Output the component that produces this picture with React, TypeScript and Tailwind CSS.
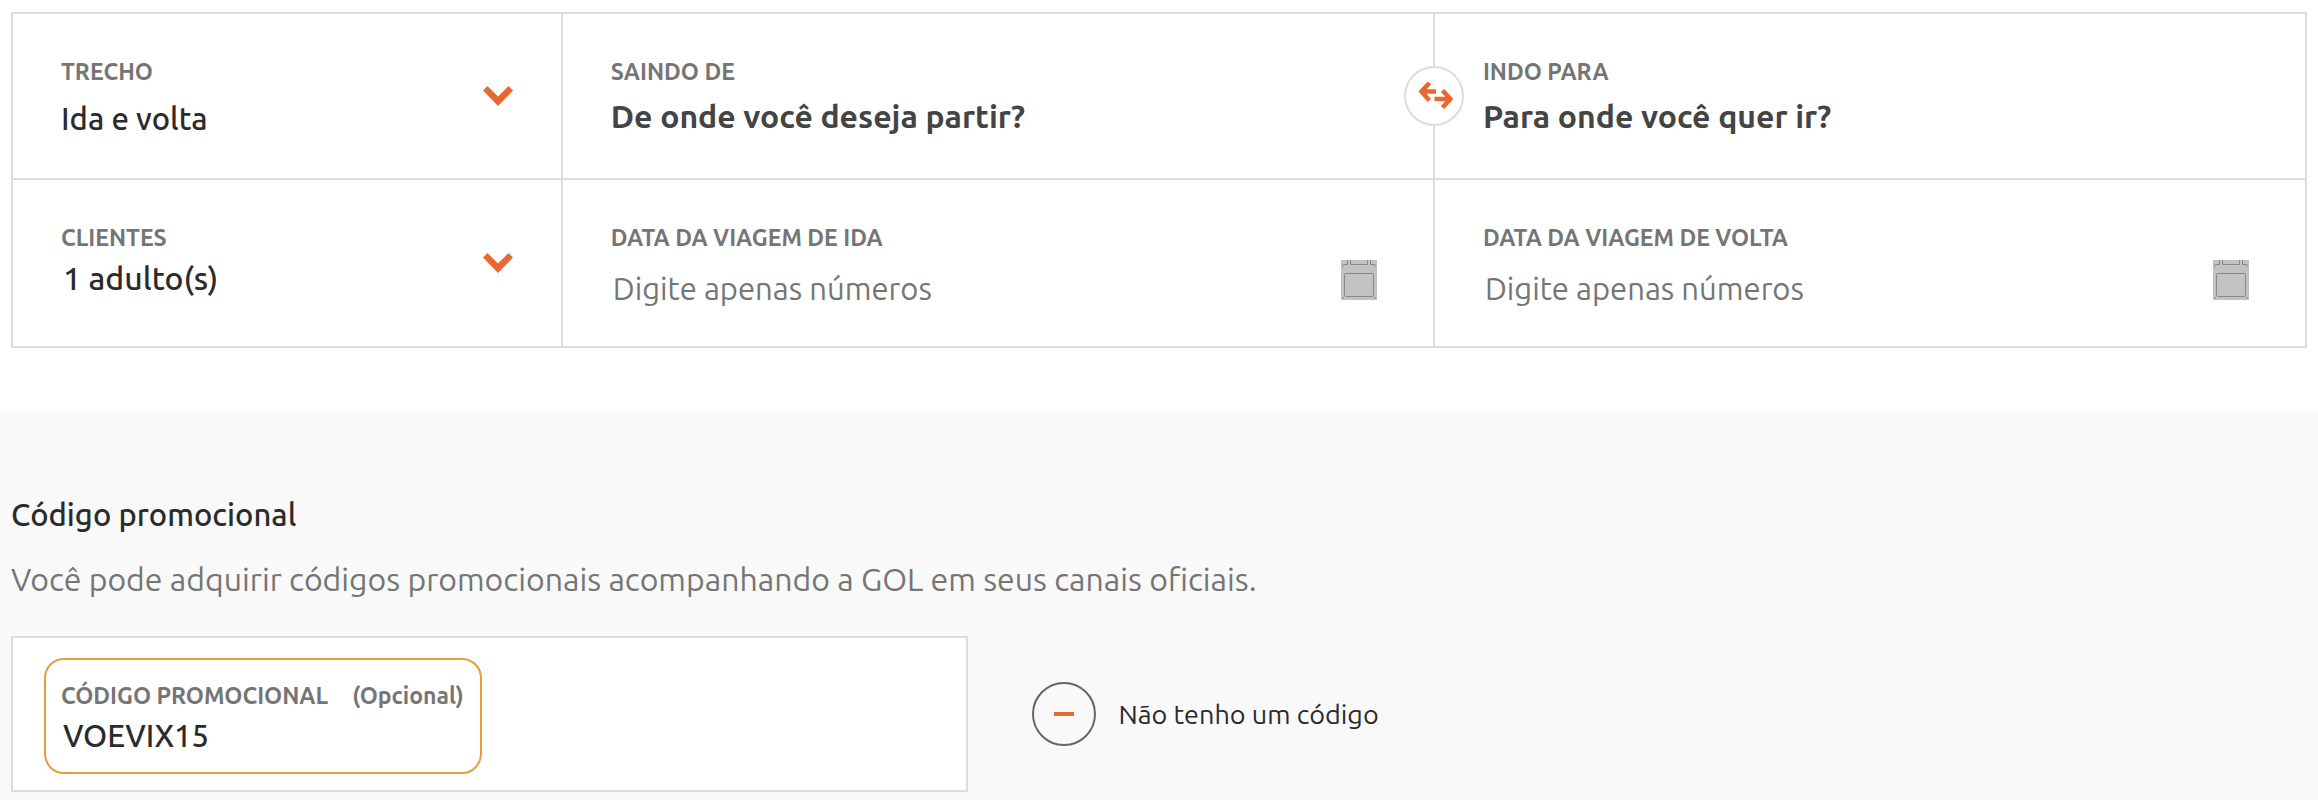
import React from "react";

const labelClass = "block text-[23px] leading-6 font-bold text-[#757575]";
const valueClass =
  "block w-full appearance-none bg-transparent leading-10 font-medium text-[#2b2b2b] outline-none";

const ChevronIcon = () => (
  <svg className="h-5 w-[30px] shrink-0 self-center" viewBox="0 0 30 20" aria-hidden="true">
    <path d="M4.5 0 15 10.6 25.5 0 30 4.6 15 20 0 4.6Z" fill="#e9682f" />
  </svg>
);

const SwapIcon = () => (
  <svg className="size-14" viewBox="0 0 56 56" fill="none" stroke="#e9682f" strokeWidth="4.6" aria-hidden="true">
    <path d="M23.5 15 15.3 23.5 23.5 32.5M16 23.5H30" strokeLinejoin="round" />
    <path d="M36.500 22.5 44.5 31 36.500 39.5M28.5 31H44.5" strokeLinejoin="round" />
  </svg>
);

const CalendarIcon = () => (
  <svg className="h-10 w-9" viewBox="0 0 36 40" fill="none" stroke="#878787" aria-hidden="true">
    <path d="M0 0H36V40H0Z" fill="#c2c2c2" stroke="none" />
    <path d="M1 7 2.5 4.5H6.5V0M9.5 0V4.5H26.5V0M29.5 0V4.5H33.5L35 7M1 37 3 39M35 37 33 39" />
    <rect x="3.5" y="13.5" width="29" height="23" rx="1" />
  </svg>
);

type SelectCellProps = {
  id: string;
  label: string;
  value: string;
  cellClass?: string;
  selectClass: string;
};

const SelectCell: React.FC<SelectCellProps> = ({ id, label, value, cellClass = "", selectClass }) => (
  <div className={`flex border-[#dcdcdc] px-12 ${cellClass}`}>
    <div className="min-w-0 flex-1 pt-[46px]">
      <label htmlFor={id} className={labelClass}>
        {label}
      </label>
      <select id={id} className={`${valueClass} ${selectClass}`}>
        <option>{value}</option>
      </select>
    </div>
    <ChevronIcon />
  </div>
);

type PlaceCellProps = {
  id: string;
  label: string;
  placeholder: string;
  children?: React.ReactNode;
};

const PlaceCell: React.FC<PlaceCellProps> = ({ id, label, placeholder, children }) => (
  <div className="relative border-l-2 border-[#dcdcdc] px-12 pt-[46px] pb-[42px]">
    {children}
    <label htmlFor={id} className={labelClass}>
      {label}
    </label>
    <input
      id={id}
      type="text"
      placeholder={placeholder}
      className="mt-3 block w-full bg-transparent text-[32px] leading-10 font-bold text-[#444444] outline-none placeholder:text-[#444444]"
    />
  </div>
);

const DateCell: React.FC<{ id: string; label: string }> = ({ id, label }) => (
  <div className="flex border-t-2 border-l-2 border-[#dcdcdc] pr-14 pl-12">
    <div className="min-w-0 flex-1 pt-[46px] pb-[37px]">
      <label htmlFor={id} className={labelClass}>
        {label}
      </label>
      <input
        id={id}
        type="text"
        inputMode="numeric"
        placeholder="Digite apenas números"
        className="mt-[19px] block w-full bg-transparent pl-0.5 text-[31px] leading-10 text-[#757575] outline-none placeholder:text-[#757575]"
      />
    </div>
    <button type="button" aria-label="Abrir calendário" className="mt-20 h-10 w-9 shrink-0">
      <CalendarIcon />
    </button>
  </div>
);

const App: React.FC = () => {
  return (
    <main className="flex min-h-screen flex-col bg-white font-[Ubuntu,'Noto_Sans',sans-serif]">
      <section className="px-[11px] pt-3 pb-16">
        <div className="grid grid-cols-[23.9%_1fr_1fr] border-2 border-[#dcdcdc]">
          <SelectCell id="trecho" label="TRECHO" value="Ida e volta" selectClass="mt-[15px] text-[31px]" />
          <PlaceCell id="origem" label="SAINDO DE" placeholder="De onde você deseja partir?" />
          <PlaceCell id="destino" label="INDO PARA" placeholder="Para onde você quer ir?">
            <button
              type="button"
              aria-label="Inverter origem e destino"
              className="absolute top-1/2 -left-[31px] flex size-[60px] -translate-y-1/2 items-center justify-center rounded-full border-2 border-[#dcdcdc] bg-white"
            >
              <SwapIcon />
            </button>
          </PlaceCell>

          <SelectCell
            id="clientes"
            label="CLIENTES"
            value="1 adulto(s)"
            cellClass="border-t-2"
            selectClass="mt-2 pl-0.5 text-[32px]"
          />
          <DateCell id="ida" label="DATA DA VIAGEM DE IDA" />
          <DateCell id="volta" label="DATA DA VIAGEM DE VOLTA" />
        </div>
      </section>

      <section className="flex-1 bg-[#f9f9f9] px-[11px] pt-[83px] pb-2">
        <h2 className="text-[31px] leading-10 font-medium text-[#2b2b2b]">Código promocional</h2>
        <p className="mt-6 text-[32px] leading-10 text-[#757575]">
          Você pode adquirir códigos promocionais acompanhando a GOL em seus canais oficiais.
        </p>

        <div className="mt-[37px] flex items-center gap-16">
          <div className="w-[41.7%] border-2 border-[#dcdcdc] bg-white pt-5 pb-4 pl-[31px]">
            <div className="w-[438px] rounded-[20px] border-2 border-[#e79c3f] px-[15px] pt-6 pb-4">
              <label htmlFor="codigo" className={`${labelClass} flex gap-6 whitespace-nowrap`}>
                <span>CÓDIGO PROMOCIONAL</span>
                <span>(Opcional)</span>
              </label>
              <input
                id="codigo"
                type="text"
                defaultValue="VOEVIX15"
                className={`${valueClass} mt-2 pl-0.5 text-[31px]`}
              />
            </div>
          </div>

          <button type="button" className="flex items-center gap-[22px] text-[27px] leading-10 text-[#2b2b2b]">
            <svg className="size-16" viewBox="0 0 64 64" fill="none" aria-hidden="true">
              <circle cx="32" cy="32" r="31" stroke="#666666" strokeWidth="2" />
              <path d="M22 32H42" stroke="#e9682f" strokeWidth="4" />
            </svg>
            Não tenho um código
          </button>
        </div>
      </section>
    </main>
  );
};

export default App;
